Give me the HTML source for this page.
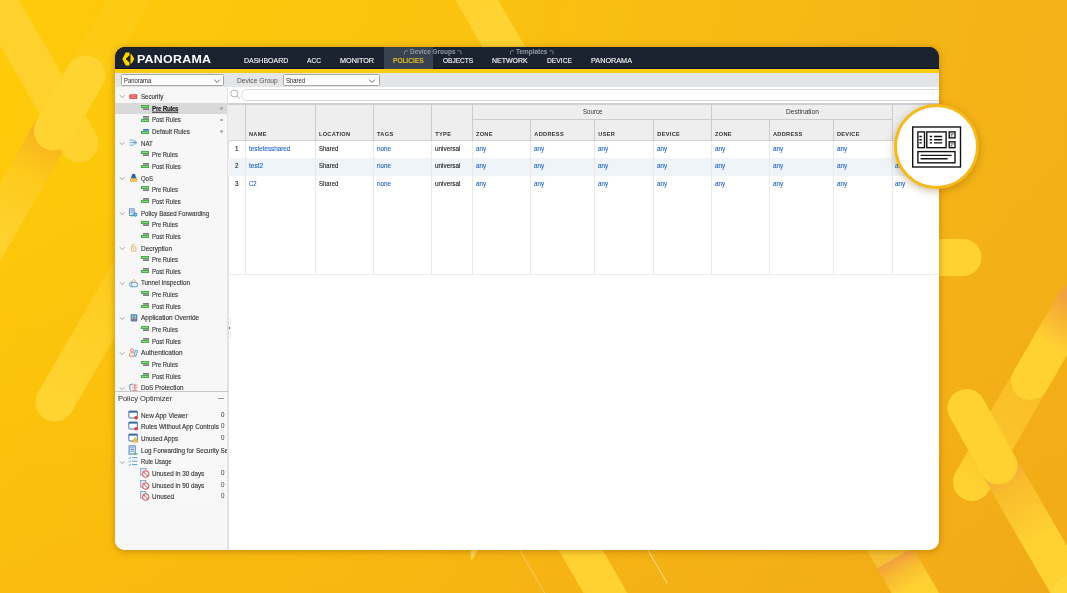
<!DOCTYPE html><html><head><meta charset="utf-8"><title>Panorama</title><style>
*{box-sizing:border-box;margin:0;padding:0}
html,body{width:1067px;height:593px;overflow:hidden;background:#F8BC14}
body{font-family:"Liberation Sans",sans-serif;position:relative}
#bg{position:absolute;left:0;top:0;width:1067px;height:593px}
#win{will-change:transform;position:absolute;left:115px;top:47px;width:824px;height:503px;border-radius:10px;background:linear-gradient(#1B2330 0,#1B2330 21px,#fff 21px,#fff 100%);overflow:hidden;box-shadow:0 1px 7px rgba(150,90,0,.55)}
.abs{position:absolute}
.t{position:absolute;white-space:nowrap;line-height:1;transform-origin:0 50%}
#hdr{position:absolute;left:0;top:0;width:824px;height:22.2px;background:#1B2330;border-bottom:1.1px solid #0C1030}
#ystripe{position:absolute;left:0;top:22.2px;width:824px;height:3.8px;background:#FACB10}
#tbar{position:absolute;left:0;top:26px;width:824px;height:14.2px;background:#E4E5E7}
#side{position:absolute;left:0;top:40.2px;width:112.6px;height:463px;background:#F7F7F7}
#sideb{position:absolute;left:112px;top:40.2px;width:1.9px;height:463px;background:#E1E3E6}
.nav{color:#F1F2F4;font-size:7.9px;-webkit-text-stroke:.15px currentColor}
.grp{color:#929AA6;font-size:6.8px;font-weight:bold}
.tr{color:#2E2E2E;font-size:6.6px;-webkit-text-stroke:.1px currentColor}
.hd{color:#333;font-size:5.65px;font-weight:bold;letter-spacing:.3px}
.cell{font-size:6.8px;color:#161616;-webkit-text-stroke:.1px currentColor}
.lnk{color:#1C63C9}
.vl{position:absolute;width:1px;background:#EAEAEA}
.vh{position:absolute;width:1px;background:#C9CCD0}
.hl{position:absolute;height:1px;background:#C9CCD0}
</style></head><body>
<svg id="bg" width="1067" height="593" viewBox="0 0 1067 593">
<defs>
<linearGradient id="g0" gradientUnits="userSpaceOnUse" x1="0" y1="150" x2="1067" y2="340"><stop offset="0" stop-color="#FECA0A"/><stop offset=".4" stop-color="#FBC20F"/><stop offset=".75" stop-color="#F5B716"/><stop offset="1" stop-color="#F3B118"/></linearGradient>
<linearGradient id="gV" x1="0" y1="0" x2="0" y2="1"><stop offset="0" stop-color="#F09A14" stop-opacity="0"/><stop offset=".25" stop-color="#F09A14" stop-opacity="0"/><stop offset="1" stop-color="#EE9816" stop-opacity=".25"/></linearGradient>
<linearGradient id="gB2" gradientUnits="userSpaceOnUse" x1="50" y1="135" x2="-20" y2="257"><stop offset="0" stop-color="#F7AE26"/><stop offset=".12" stop-color="#FABB1C"/><stop offset=".32" stop-color="#FDCA1C"/><stop offset=".7" stop-color="#FED02A"/><stop offset="1" stop-color="#FED32F"/></linearGradient>
<linearGradient id="gC" gradientUnits="userSpaceOnUse" x1="125" y1="281" x2="55" y2="402"><stop offset="0" stop-color="#FDCB1E"/><stop offset="1" stop-color="#FFD431"/></linearGradient>
<linearGradient id="gT" gradientUnits="userSpaceOnUse" x1="465" y1="-20" x2="510" y2="58"><stop offset="0" stop-color="#FECF2C"/><stop offset=".5" stop-color="#FFD331"/><stop offset="1" stop-color="#FFD431"/></linearGradient>
<linearGradient id="gR2" gradientUnits="userSpaceOnUse" x1="1000" y1="468" x2="1075" y2="598"><stop offset="0" stop-color="#F5A83C"/><stop offset=".15" stop-color="#F9BC2C"/><stop offset=".55" stop-color="#FFD232"/><stop offset="1" stop-color="#FFD232"/></linearGradient>
<linearGradient id="gR3" gradientUnits="userSpaceOnUse" x1="884" y1="539.2" x2="914" y2="591.2"><stop offset="0" stop-color="#F8C232"/><stop offset=".36" stop-color="#F7BE33"/><stop offset=".37" stop-color="#F2A23E"/><stop offset=".65" stop-color="#F9BE30"/><stop offset=".95" stop-color="#FFD232"/></linearGradient>
<linearGradient id="gR4" gradientUnits="userSpaceOnUse" x1="1040" y1="390" x2="980" y2="494"><stop offset="0" stop-color="#F9BE26"/><stop offset=".6" stop-color="#FBC52B"/><stop offset="1" stop-color="#FFD232"/></linearGradient>
<linearGradient id="gR5" gradientUnits="userSpaceOnUse" x1="1075" y1="303" x2="1050" y2="346.300"><stop offset="0" stop-color="#F3A33E"/><stop offset=".35" stop-color="#F7B334"/><stop offset="1" stop-color="#FFD232"/></linearGradient>
</defs>
<rect width="1067" height="593" fill="url(#g0)"/>
<rect width="1067" height="593" fill="url(#gV)"/>
<g fill="none" stroke-linecap="round">
<!-- left X -->
<line x1="-20" y1="257" x2="54" y2="128" stroke="url(#gB2)" stroke-width="39" stroke-linecap="butt"/>
<line x1="-22" y1="-32" x2="79" y2="143" stroke="#FED12D" stroke-width="39"/>
<line x1="140" y1="-20" x2="85" y2="75.300" stroke="#FFE46A" stroke-opacity=".09" stroke-width="38" stroke-linecap="butt"/>
<line x1="85.5" y1="75.300" x2="53.500" y2="130.700" stroke="#FFD330" stroke-width="39.500"/>
<!-- left lower pill -->
<line x1="135" y1="263.5" x2="55" y2="402" stroke="url(#gC)" stroke-width="39"/>
<!-- top band -->
<line x1="465" y1="-20" x2="515" y2="66" stroke="url(#gT)" stroke-width="37" stroke-linecap="butt"/>
<!-- bottom middle band and lines -->
<line x1="569" y1="530" x2="620" y2="618" stroke="#FFD232" stroke-width="38" stroke-linecap="butt"/>
<line x1="514" y1="540" x2="550" y2="602" stroke="#FAD57A" stroke-opacity=".8" stroke-width="1"/>
<line x1="642" y1="540" x2="667" y2="583" stroke="#FBDFA0" stroke-opacity=".8" stroke-width="1.1"/>
<path d="M470 548 L479 548 L471.5 561 Z" fill="#FDD65A" stroke="none"/>
<!-- right: horizontal pill -->
<line x1="900" y1="257.4" x2="963" y2="257.4" stroke="#FFD232" stroke-width="37"/>
<!-- right X -->
<line x1="1040" y1="364" x2="972" y2="482" stroke="url(#gR4)" stroke-width="38"/>
<line x1="998.5" y1="465.5" x2="1085" y2="615" stroke="url(#gR2)" stroke-width="38" stroke-linecap="butt"/>
<line x1="966.5" y1="408" x2="998.5" y2="465.5" stroke="#FFD232" stroke-width="38"/>
<line x1="1075" y1="303" x2="1030" y2="381" stroke="url(#gR5)" stroke-width="38"/>
<circle cx="1071" cy="596" r="20" fill="#FFD739" stroke="none"/>
<!-- band under window right -->
<line x1="879" y1="530" x2="931" y2="620" stroke="url(#gR3)" stroke-width="41" stroke-linecap="butt"/>
</g>
</svg>

<div id="win">
<div id="hdr"></div><div id="ystripe"></div><div id="tbar"></div><div id="side"></div><div id="sideb"></div>
<div class="abs" style="left:268.8px;top:0;width:48.8px;height:22px;background:#39424F"></div>
<svg class="abs" style="left:6px;top:4px" width="15" height="16" viewBox="121 51 15 16"><path d="M129.5 52.5H125.7L122.3 58.9L125.7 65.4H129.5V62.6L125.6 58.9L129.5 55.2Z" fill="#FFD500"/><path d="M130.5 54.3H131.6L134.3 58.9L131.6 63.5H130.5Z" fill="#FFD500"/></svg>
<div class="t " style="left:22.2px;top:12.8px;transform:translateY(-50%) scaleX(1.220);color:#fff;font-weight:bold;font-size:10.2px;letter-spacing:.2px">PANORAMA</div>
<div class="t nav" style="left:128.6px;top:13.6px;transform:translateY(-50%) scaleX(0.886);">DASHBOARD</div>
<div class="t nav" style="left:191.9px;top:13.6px;transform:translateY(-50%) scaleX(0.834);">ACC</div>
<div class="t nav" style="left:224.8px;top:13.6px;transform:translateY(-50%) scaleX(0.918);">MONITOR</div>
<div class="t nav" style="left:277.7px;top:13.6px;transform:translateY(-50%) scaleX(0.846);color:#FFD01C;">POLICIES</div>
<div class="t nav" style="left:327.8px;top:13.6px;transform:translateY(-50%) scaleX(0.827);">OBJECTS</div>
<div class="t nav" style="left:376.8px;top:13.6px;transform:translateY(-50%) scaleX(0.885);">NETWORK</div>
<div class="t nav" style="left:431.5px;top:13.6px;transform:translateY(-50%) scaleX(0.854);">DEVICE</div>
<div class="t nav" style="left:475.8px;top:13.6px;transform:translateY(-50%) scaleX(0.920);">PANORAMA</div>
<div class="t grp" style="left:295.2px;top:5.3px;transform:translateY(-50%) scaleX(0.948);">Device Groups</div>
<div class="t grp" style="left:401.2px;top:5.3px;transform:translateY(-50%) scaleX(0.945);">Templates</div>
<svg class="abs" style="left:288.6px;top:3.4px" width="4.6" height="4.6" viewBox="0 0 4.6 4.6"><path d="M.5 4.4V2.2Q.5 .8 2 .8H4.2" fill="none" stroke="#8B94A1" stroke-width=".8"/></svg>
<svg class="abs" style="left:342.0px;top:3.4px" width="4.6" height="4.6" viewBox="0 0 4.6 4.6"><path d="M.4 .8H2.6Q4.1 .8 4.1 2.2V4.4" fill="none" stroke="#8B94A1" stroke-width=".8"/></svg>
<svg class="abs" style="left:394.8px;top:3.4px" width="4.6" height="4.6" viewBox="0 0 4.6 4.6"><path d="M.5 4.4V2.2Q.5 .8 2 .8H4.2" fill="none" stroke="#8B94A1" stroke-width=".8"/></svg>
<svg class="abs" style="left:434.2px;top:3.4px" width="4.6" height="4.6" viewBox="0 0 4.6 4.6"><path d="M.4 .8H2.6Q4.1 .8 4.1 2.2V4.4" fill="none" stroke="#8B94A1" stroke-width=".8"/></svg>
<div class="abs" style="left:5.6px;top:27.2px;width:103.9px;height:11.9px;background:#fff;border:.8px solid #A6A6A6;border-radius:1.5px"></div>
<div class="t " style="left:8.6px;top:33.9px;transform:translateY(-50%) scaleX(0.867);font-size:6.8px;color:#222">Panorama</div>
<svg class="abs" style="left:98.3px;top:30.5px" width="8" height="6" viewBox="0 0 8 6"><path d="M1.2 1.6 L4 4.4 L6.8 1.6" fill="none" stroke="#555" stroke-width=".9"/></svg>
<div class="t " style="left:122.0px;top:34.0px;transform:translateY(-50%) scaleX(0.914);font-size:7.3px;color:#555">Device Group</div>
<div class="abs" style="left:168.3px;top:27.2px;width:96.3px;height:11.9px;background:#fff;border:.8px solid #A6A6A6;border-radius:1.5px"></div>
<div class="t " style="left:171.3px;top:33.9px;transform:translateY(-50%) scaleX(0.871);font-size:6.8px;color:#222">Shared</div>
<svg class="abs" style="left:253.4px;top:30.5px" width="8" height="6" viewBox="0 0 8 6"><path d="M1.2 1.6 L4 4.4 L6.8 1.6" fill="none" stroke="#555" stroke-width=".9"/></svg>
<div class="abs" style="left:113.2px;top:40.2px;width:720px;height:16.6px;background:#fff"></div>
<div class="abs" style="left:126.0px;top:42.2px;width:720px;height:11.6px;border:.9px solid #D9D9D9;border-radius:5.8px;background:#fff"></div>
<svg class="abs" style="left:114.6px;top:42.400000000000006px" width="11" height="11" viewBox="0 0 11 11"><circle cx="4.3" cy="4.5" r="3.5" fill="none" stroke="#9A9A9A" stroke-width=".75"/><path d="M6.9 7.1 L9.7 10" stroke="#9A9A9A" stroke-width=".85"/></svg>
<div class="abs" style="left:113.4px;top:57.3px;width:720px;height:36.3px;background:#EEEEEE"></div>
<div class="abs" style="left:113.4px;top:56.3px;width:720px;height:1.4px;background:#CDCFD2"></div>
<div class="abs" style="left:113.4px;top:111.3px;width:720px;height:17.5px;background:#EEF4F8"></div>
<div class="vh" style="left:129.9px;top:57.3px;height:36.3px"></div>
<div class="vl" style="left:129.9px;top:94.0px;height:133.3px"></div>
<div class="vh" style="left:199.8px;top:57.3px;height:36.3px"></div>
<div class="vl" style="left:199.8px;top:94.0px;height:133.3px"></div>
<div class="vh" style="left:257.9px;top:57.3px;height:36.3px"></div>
<div class="vl" style="left:257.9px;top:94.0px;height:133.3px"></div>
<div class="vh" style="left:316.3px;top:57.3px;height:36.3px"></div>
<div class="vl" style="left:316.3px;top:94.0px;height:133.3px"></div>
<div class="vh" style="left:356.8px;top:57.3px;height:36.3px"></div>
<div class="vl" style="left:356.8px;top:94.0px;height:133.3px"></div>
<div class="vh" style="left:415.2px;top:71.9px;height:21.7px"></div>
<div class="vl" style="left:415.2px;top:94.0px;height:133.3px"></div>
<div class="vh" style="left:479.2px;top:71.9px;height:21.7px"></div>
<div class="vl" style="left:479.2px;top:94.0px;height:133.3px"></div>
<div class="vh" style="left:538.2px;top:71.9px;height:21.7px"></div>
<div class="vl" style="left:538.2px;top:94.0px;height:133.3px"></div>
<div class="vh" style="left:595.9px;top:57.3px;height:36.3px"></div>
<div class="vl" style="left:595.9px;top:94.0px;height:133.3px"></div>
<div class="vh" style="left:653.9px;top:71.9px;height:21.7px"></div>
<div class="vl" style="left:653.9px;top:94.0px;height:133.3px"></div>
<div class="vh" style="left:717.8px;top:71.9px;height:21.7px"></div>
<div class="vl" style="left:717.8px;top:94.0px;height:133.3px"></div>
<div class="vh" style="left:776.7px;top:57.3px;height:36.3px"></div>
<div class="vl" style="left:776.7px;top:94.0px;height:133.3px"></div>
<div class="hl" style="left:357.3px;top:71.8px;width:419.9px"></div>
<div class="abs" style="left:113.4px;top:93.1px;width:720px;height:1px;background:#D2D2D2"></div>
<div class="hl" style="left:113.4px;top:226.8px;width:720px;background:#ECECEC"></div>
<div class="t " style="left:467.6px;top:64.9px;transform:translateY(-50%) scaleX(0.915);font-size:6.7px;color:#333">Source</div>
<div class="t " style="left:670.5px;top:64.9px;transform:translateY(-50%) scaleX(0.983);font-size:6.7px;color:#333">Destination</div>
<div class="t hd" style="left:133.9px;top:88.0px;transform:translateY(-50%) scaleX(1.0);">NAME</div>
<div class="t hd" style="left:203.9px;top:88.0px;transform:translateY(-50%) scaleX(1.0);">LOCATION</div>
<div class="t hd" style="left:262.0px;top:88.0px;transform:translateY(-50%) scaleX(1.0);">TAGS</div>
<div class="t hd" style="left:320.3px;top:88.0px;transform:translateY(-50%) scaleX(1.0);">TYPE</div>
<div class="t hd" style="left:360.9px;top:88.0px;transform:translateY(-50%) scaleX(1.0);">ZONE</div>
<div class="t hd" style="left:419.3px;top:88.0px;transform:translateY(-50%) scaleX(1.0);">ADDRESS</div>
<div class="t hd" style="left:483.3px;top:88.0px;transform:translateY(-50%) scaleX(1.0);">USER</div>
<div class="t hd" style="left:542.3px;top:88.0px;transform:translateY(-50%) scaleX(1.0);">DEVICE</div>
<div class="t hd" style="left:600.0px;top:88.0px;transform:translateY(-50%) scaleX(1.0);">ZONE</div>
<div class="t hd" style="left:658.0px;top:88.0px;transform:translateY(-50%) scaleX(1.0);">ADDRESS</div>
<div class="t hd" style="left:721.9px;top:88.0px;transform:translateY(-50%) scaleX(1.0);">DEVICE</div>
<div class="t cell" style="left:120.2px;top:101.8px;transform:translateY(-50%) scaleX(0.925);">1</div>
<div class="t cell lnk" style="left:133.9px;top:101.8px;transform:translateY(-50%) scaleX(0.926);">testetesshared</div>
<div class="t cell" style="left:203.6px;top:101.8px;transform:translateY(-50%) scaleX(0.880);">Shared</div>
<div class="t cell lnk" style="left:261.9px;top:101.8px;transform:translateY(-50%) scaleX(0.926);">none</div>
<div class="t cell" style="left:319.8px;top:101.8px;transform:translateY(-50%) scaleX(0.934);">universal</div>
<div class="t cell lnk" style="left:360.9px;top:101.8px;transform:translateY(-50%) scaleX(0.930);">any</div>
<div class="t cell lnk" style="left:419.3px;top:101.8px;transform:translateY(-50%) scaleX(0.930);">any</div>
<div class="t cell lnk" style="left:483.3px;top:101.8px;transform:translateY(-50%) scaleX(0.930);">any</div>
<div class="t cell lnk" style="left:542.3px;top:101.8px;transform:translateY(-50%) scaleX(0.930);">any</div>
<div class="t cell lnk" style="left:600.0px;top:101.8px;transform:translateY(-50%) scaleX(0.930);">any</div>
<div class="t cell lnk" style="left:658.0px;top:101.8px;transform:translateY(-50%) scaleX(0.930);">any</div>
<div class="t cell lnk" style="left:721.9px;top:101.8px;transform:translateY(-50%) scaleX(0.930);">any</div>
<div class="t cell lnk" style="left:780.3px;top:101.8px;transform:translateY(-50%) scaleX(0.930);">any</div>
<div class="t cell" style="left:120.2px;top:119.2px;transform:translateY(-50%) scaleX(0.925);">2</div>
<div class="t cell lnk" style="left:133.9px;top:119.2px;transform:translateY(-50%) scaleX(0.963);">test2</div>
<div class="t cell" style="left:203.6px;top:119.2px;transform:translateY(-50%) scaleX(0.880);">Shared</div>
<div class="t cell lnk" style="left:261.9px;top:119.2px;transform:translateY(-50%) scaleX(0.926);">none</div>
<div class="t cell" style="left:319.8px;top:119.2px;transform:translateY(-50%) scaleX(0.934);">universal</div>
<div class="t cell lnk" style="left:360.9px;top:119.2px;transform:translateY(-50%) scaleX(0.930);">any</div>
<div class="t cell lnk" style="left:419.3px;top:119.2px;transform:translateY(-50%) scaleX(0.930);">any</div>
<div class="t cell lnk" style="left:483.3px;top:119.2px;transform:translateY(-50%) scaleX(0.930);">any</div>
<div class="t cell lnk" style="left:542.3px;top:119.2px;transform:translateY(-50%) scaleX(0.930);">any</div>
<div class="t cell lnk" style="left:600.0px;top:119.2px;transform:translateY(-50%) scaleX(0.930);">any</div>
<div class="t cell lnk" style="left:658.0px;top:119.2px;transform:translateY(-50%) scaleX(0.930);">any</div>
<div class="t cell lnk" style="left:721.9px;top:119.2px;transform:translateY(-50%) scaleX(0.930);">any</div>
<div class="t cell lnk" style="left:780.3px;top:119.2px;transform:translateY(-50%) scaleX(0.930);">any</div>
<div class="t cell" style="left:120.2px;top:136.6px;transform:translateY(-50%) scaleX(0.925);">3</div>
<div class="t cell lnk" style="left:133.9px;top:136.6px;transform:translateY(-50%) scaleX(0.873);">C2</div>
<div class="t cell" style="left:203.6px;top:136.6px;transform:translateY(-50%) scaleX(0.880);">Shared</div>
<div class="t cell lnk" style="left:261.9px;top:136.6px;transform:translateY(-50%) scaleX(0.926);">none</div>
<div class="t cell" style="left:319.8px;top:136.6px;transform:translateY(-50%) scaleX(0.934);">universal</div>
<div class="t cell lnk" style="left:360.9px;top:136.6px;transform:translateY(-50%) scaleX(0.930);">any</div>
<div class="t cell lnk" style="left:419.3px;top:136.6px;transform:translateY(-50%) scaleX(0.930);">any</div>
<div class="t cell lnk" style="left:483.3px;top:136.6px;transform:translateY(-50%) scaleX(0.930);">any</div>
<div class="t cell lnk" style="left:542.3px;top:136.6px;transform:translateY(-50%) scaleX(0.930);">any</div>
<div class="t cell lnk" style="left:600.0px;top:136.6px;transform:translateY(-50%) scaleX(0.930);">any</div>
<div class="t cell lnk" style="left:658.0px;top:136.6px;transform:translateY(-50%) scaleX(0.930);">any</div>
<div class="t cell lnk" style="left:721.9px;top:136.6px;transform:translateY(-50%) scaleX(0.930);">any</div>
<div class="t cell lnk" style="left:780.3px;top:136.6px;transform:translateY(-50%) scaleX(0.930);">any</div>
<div class="abs" style="left:0;top:55.6px;width:112.3px;height:11.1px;background:#D9D9D9"></div>
<svg class="abs" style="left:3.9px;top:47.3px" width="6.4" height="4.8" viewBox="0 0 6.4 4.8"><path d="M.8 1.2 L3.2 3.7 L5.6 1.2" fill="none" stroke="#8C8C8C" stroke-width=".75"/></svg>
<svg class="abs" style="left:13.6px;top:44.7px" width="9.2" height="9.6" viewBox="0 0 9.2 9.6"><rect x="0.3" y="2.2" width="8" height="4.8" rx="1" fill="#DC4B4B"/><path d="M1.3 3.8h6M1.3 5.4h6M3 2.6v1.2M5.6 2.6v1.2M4.3 3.8v1.6M2.2 5.4v1.2M6.2 5.4v1.2" stroke="#F6B9B9" stroke-width=".5"/></svg>
<div class="t tr" style="left:25.7px;top:50.0px;transform:translateY(-50%) scaleX(0.932);">Security</div>
<div class="abs" style="left:27.7px;top:60.2px;width:6.5px;height:2.7px;background:#9C9C9C;border-bottom:.7px solid #7E7E7E"></div>
<div class="abs" style="left:25.7px;top:57.5px;width:8.5px;height:3.2px;background:#8FD38B;border:.75px solid #43B049"></div>
<div class="t tr" style="left:37.2px;top:61.6px;transform:translateY(-50%) scaleX(0.948);font-weight:bold;text-decoration:underline;color:#222;letter-spacing:-.3px;text-decoration-thickness:.6px;text-underline-offset:.6px">Pre Rules</div>
<div class="abs" style="left:105.4px;top:59.9px;width:2.8px;height:2.8px;border-radius:50%;background:#ABABAB"></div>
<div class="abs" style="left:27.7px;top:69.2px;width:6.5px;height:3px;background:#9C9C9C;border-top:.7px solid #7E7E7E"></div>
<div class="abs" style="left:25.7px;top:71.6px;width:8.5px;height:3.2px;background:#8FD38B;border:.75px solid #43B049"></div>
<div class="t tr" style="left:37.2px;top:73.2px;transform:translateY(-50%) scaleX(0.903);">Post Rules</div>
<div class="abs" style="left:105.4px;top:71.5px;width:2.8px;height:2.8px;border-radius:50%;background:#ABABAB"></div>
<div class="abs" style="left:27.7px;top:81.5px;width:6.5px;height:3px;background:#6FA3DA;border-top:.8px solid #2F6FBA;border-radius:1px 1px 0 0"></div>
<div class="abs" style="left:25.7px;top:83.7px;width:8.5px;height:3.2px;background:#8FD38B;border:.75px solid #43B049"></div>
<div class="t tr" style="left:37.2px;top:84.8px;transform:translateY(-50%) scaleX(0.955);">Default Rules</div>
<div class="abs" style="left:105.4px;top:83.1px;width:2.8px;height:2.8px;border-radius:50%;background:#ABABAB"></div>
<svg class="abs" style="left:3.9px;top:93.9px" width="6.4" height="4.8" viewBox="0 0 6.4 4.8"><path d="M.8 1.2 L3.2 3.7 L5.6 1.2" fill="none" stroke="#8C8C8C" stroke-width=".75"/></svg>
<svg class="abs" style="left:13.6px;top:91.3px" width="9.2" height="9.6" viewBox="0 0 9.2 9.6"><path d="M.6 2h3.2M.6 4.6h7M.6 7.2h3.2M3.8 2c1 0 1.6 1.1 1.6 2.6S4.8 7.2 3.8 7.2M6 2.9l1.8 1.7L6 6.3" fill="none" stroke="#3A8FD0" stroke-width=".75"/></svg>
<div class="t tr" style="left:25.7px;top:96.6px;transform:translateY(-50%) scaleX(0.937);">NAT</div>
<div class="abs" style="left:27.7px;top:106.8px;width:6.5px;height:2.7px;background:#9C9C9C;border-bottom:.7px solid #7E7E7E"></div>
<div class="abs" style="left:25.7px;top:104.0px;width:8.5px;height:3.2px;background:#8FD38B;border:.75px solid #43B049"></div>
<div class="t tr" style="left:37.2px;top:108.2px;transform:translateY(-50%) scaleX(0.894);">Pre Rules</div>
<div class="abs" style="left:27.7px;top:115.8px;width:6.5px;height:3px;background:#9C9C9C;border-top:.7px solid #7E7E7E"></div>
<div class="abs" style="left:25.7px;top:118.2px;width:8.5px;height:3.2px;background:#8FD38B;border:.75px solid #43B049"></div>
<div class="t tr" style="left:37.2px;top:119.8px;transform:translateY(-50%) scaleX(0.903);">Post Rules</div>
<svg class="abs" style="left:3.9px;top:128.8px" width="6.4" height="4.8" viewBox="0 0 6.4 4.8"><path d="M.8 1.2 L3.2 3.7 L5.6 1.2" fill="none" stroke="#8C8C8C" stroke-width=".75"/></svg>
<svg class="abs" style="left:13.6px;top:126.2px" width="9.2" height="9.6" viewBox="0 0 9.2 9.6"><path d="M4.6 .8c1.2 0 1.9.9 1.9 2.1 0 .7.5 1.1.9 1.6v.9H1.8v-.9c.4-.5.9-.9.9-1.6C2.700 1.700 3.400.800 4.600.800z" fill="#2E5FA4"/><rect x="1" y="5.600" width="7.300" height="3.200" rx=".7" fill="#E9B233"/><path d="M2 7.200h5.300" stroke="#FBE7B5" stroke-width=".9" stroke-dasharray="1.4 .5"/></svg>
<div class="t tr" style="left:25.7px;top:131.6px;transform:translateY(-50%) scaleX(0.901);">QoS</div>
<div class="abs" style="left:27.7px;top:141.7px;width:6.5px;height:2.7px;background:#9C9C9C;border-bottom:.7px solid #7E7E7E"></div>
<div class="abs" style="left:25.7px;top:139.0px;width:8.5px;height:3.2px;background:#8FD38B;border:.75px solid #43B049"></div>
<div class="t tr" style="left:37.2px;top:143.1px;transform:translateY(-50%) scaleX(0.894);">Pre Rules</div>
<div class="abs" style="left:27.7px;top:150.8px;width:6.5px;height:3px;background:#9C9C9C;border-top:.7px solid #7E7E7E"></div>
<div class="abs" style="left:25.7px;top:153.2px;width:8.5px;height:3.2px;background:#8FD38B;border:.75px solid #43B049"></div>
<div class="t tr" style="left:37.2px;top:154.8px;transform:translateY(-50%) scaleX(0.903);">Post Rules</div>
<svg class="abs" style="left:3.9px;top:163.8px" width="6.4" height="4.8" viewBox="0 0 6.4 4.8"><path d="M.8 1.2 L3.2 3.7 L5.6 1.2" fill="none" stroke="#8C8C8C" stroke-width=".75"/></svg>
<svg class="abs" style="left:13.6px;top:161.2px" width="9.2" height="9.6" viewBox="0 0 9.2 9.6"><rect x=".6" y=".8" width="4.6" height="6.6" fill="#DCE9F6" stroke="#3A73B5" stroke-width=".7"/><path d="M1.6 2.6h2.6M1.6 4.2h2.6" stroke="#3A73B5" stroke-width=".6"/><circle cx="6.3" cy="6.6" r="2.1" fill="#3A8FD0"/><path d="M5.3 6.6h2M6.5 5.7l.9.9-.9.9" stroke="#fff" stroke-width=".5" fill="none"/><circle cx="3" cy="7.6" r="1.1" fill="#4DB748"/></svg>
<div class="t tr" style="left:25.7px;top:166.5px;transform:translateY(-50%) scaleX(0.934);">Policy Based Forwarding</div>
<div class="abs" style="left:27.7px;top:176.7px;width:6.5px;height:2.7px;background:#9C9C9C;border-bottom:.7px solid #7E7E7E"></div>
<div class="abs" style="left:25.7px;top:174.0px;width:8.5px;height:3.2px;background:#8FD38B;border:.75px solid #43B049"></div>
<div class="t tr" style="left:37.2px;top:178.1px;transform:translateY(-50%) scaleX(0.894);">Pre Rules</div>
<div class="abs" style="left:27.7px;top:185.7px;width:6.5px;height:3px;background:#9C9C9C;border-top:.7px solid #7E7E7E"></div>
<div class="abs" style="left:25.7px;top:188.1px;width:8.5px;height:3.2px;background:#8FD38B;border:.75px solid #43B049"></div>
<div class="t tr" style="left:37.2px;top:189.7px;transform:translateY(-50%) scaleX(0.903);">Post Rules</div>
<svg class="abs" style="left:3.9px;top:198.8px" width="6.4" height="4.8" viewBox="0 0 6.4 4.8"><path d="M.8 1.2 L3.2 3.7 L5.6 1.2" fill="none" stroke="#8C8C8C" stroke-width=".75"/></svg>
<svg class="abs" style="left:13.6px;top:196.2px" width="9.2" height="9.6" viewBox="0 0 9.2 9.6"><rect x="2.3" y="3.8" width="4.6" height="4.2" rx=".6" fill="none" stroke="#E2A43A" stroke-width=".75"/><path d="M3.2 3.8V2.6a1.4 1.4 0 0 1 2.6-.6" fill="none" stroke="#E2A43A" stroke-width=".75"/><circle cx="4.6" cy="5.8" r=".6" fill="#E2A43A"/></svg>
<div class="t tr" style="left:25.7px;top:201.5px;transform:translateY(-50%) scaleX(0.983);">Decryption</div>
<div class="abs" style="left:27.7px;top:211.6px;width:6.5px;height:2.7px;background:#9C9C9C;border-bottom:.7px solid #7E7E7E"></div>
<div class="abs" style="left:25.7px;top:208.9px;width:8.5px;height:3.2px;background:#8FD38B;border:.75px solid #43B049"></div>
<div class="t tr" style="left:37.2px;top:213.0px;transform:translateY(-50%) scaleX(0.894);">Pre Rules</div>
<div class="abs" style="left:27.7px;top:220.7px;width:6.5px;height:3px;background:#9C9C9C;border-top:.7px solid #7E7E7E"></div>
<div class="abs" style="left:25.7px;top:223.1px;width:8.5px;height:3.2px;background:#8FD38B;border:.75px solid #43B049"></div>
<div class="t tr" style="left:37.2px;top:224.6px;transform:translateY(-50%) scaleX(0.903);">Post Rules</div>
<svg class="abs" style="left:3.9px;top:233.7px" width="6.4" height="4.8" viewBox="0 0 6.4 4.8"><path d="M.8 1.2 L3.2 3.7 L5.6 1.2" fill="none" stroke="#8C8C8C" stroke-width=".75"/></svg>
<svg class="abs" style="left:13.6px;top:231.1px" width="9.2" height="9.6" viewBox="0 0 9.2 9.6"><path d="M2.7 4.6C2.7 .9 6.9 .9 6.9 4.6" fill="none" stroke="#E6A63A" stroke-width=".85"/><rect x=".6" y="4.4" width="8.2" height="4.4" rx="2.1" fill="#EEF4FB" stroke="#3A80C8" stroke-width=".8"/><path d="M2.8 4.6v4" stroke="#3A80C8" stroke-width=".6"/></svg>
<div class="t tr" style="left:25.7px;top:236.4px;transform:translateY(-50%) scaleX(0.944);">Tunnel Inspection</div>
<div class="abs" style="left:27.7px;top:246.6px;width:6.5px;height:2.7px;background:#9C9C9C;border-bottom:.7px solid #7E7E7E"></div>
<div class="abs" style="left:25.7px;top:243.9px;width:8.5px;height:3.2px;background:#8FD38B;border:.75px solid #43B049"></div>
<div class="t tr" style="left:37.2px;top:247.9px;transform:translateY(-50%) scaleX(0.894);">Pre Rules</div>
<div class="abs" style="left:27.7px;top:255.6px;width:6.5px;height:3px;background:#9C9C9C;border-top:.7px solid #7E7E7E"></div>
<div class="abs" style="left:25.7px;top:258.0px;width:8.5px;height:3.2px;background:#8FD38B;border:.75px solid #43B049"></div>
<div class="t tr" style="left:37.2px;top:259.6px;transform:translateY(-50%) scaleX(0.903);">Post Rules</div>
<svg class="abs" style="left:3.9px;top:268.7px" width="6.4" height="4.8" viewBox="0 0 6.4 4.8"><path d="M.8 1.2 L3.2 3.7 L5.6 1.2" fill="none" stroke="#8C8C8C" stroke-width=".75"/></svg>
<svg class="abs" style="left:13.6px;top:266.1px" width="9.2" height="9.6" viewBox="0 0 9.2 9.6"><rect x="1.7" y="1.2" width="6.6" height="7.4" rx="1" fill="#3F7EC6"/><path d="M2.8 2.4h1.7v1.5H2.8zM5.5 2.4h1.7v1.5H5.5z" fill="#BFE0C0"/><path d="M2.8 4.4h1.7v1.4H2.8zM5.5 4.4h1.7v1.4H5.5z" fill="#E9D27A"/><path d="M2.8 6.3h1.7v1.4H2.8zM5.5 6.3h1.7v1.4H5.5z" fill="#E56A5A"/></svg>
<div class="t tr" style="left:25.7px;top:271.4px;transform:translateY(-50%) scaleX(0.980);">Application Override</div>
<div class="abs" style="left:27.7px;top:281.5px;width:6.5px;height:2.7px;background:#9C9C9C;border-bottom:.7px solid #7E7E7E"></div>
<div class="abs" style="left:25.7px;top:278.8px;width:8.5px;height:3.2px;background:#8FD38B;border:.75px solid #43B049"></div>
<div class="t tr" style="left:37.2px;top:282.9px;transform:translateY(-50%) scaleX(0.894);">Pre Rules</div>
<div class="abs" style="left:27.7px;top:290.5px;width:6.5px;height:3px;background:#9C9C9C;border-top:.7px solid #7E7E7E"></div>
<div class="abs" style="left:25.7px;top:292.9px;width:8.5px;height:3.2px;background:#8FD38B;border:.75px solid #43B049"></div>
<div class="t tr" style="left:37.2px;top:294.5px;transform:translateY(-50%) scaleX(0.903);">Post Rules</div>
<svg class="abs" style="left:3.9px;top:303.6px" width="6.4" height="4.8" viewBox="0 0 6.4 4.8"><path d="M.8 1.2 L3.2 3.7 L5.6 1.2" fill="none" stroke="#8C8C8C" stroke-width=".75"/></svg>
<svg class="abs" style="left:13.6px;top:301.0px" width="9.2" height="9.6" viewBox="0 0 9.2 9.6"><circle cx="3.1" cy="2.4" r="1.6" fill="#fff" stroke="#E8643C" stroke-width=".8"/><path d="M.6 8.2V6.6c0-1.2 1-1.9 2.5-1.9s2.5.7 2.5 1.9v1.6z" fill="#fff" stroke="#E8643C" stroke-width=".8"/><path d="M6.6 2.2l2 .6-1.7 5.6-2-.6z" fill="#DDEBF8" stroke="#3A8FD0" stroke-width=".75"/></svg>
<div class="t tr" style="left:25.7px;top:306.3px;transform:translateY(-50%) scaleX(0.995);">Authentication</div>
<div class="abs" style="left:27.7px;top:316.4px;width:6.5px;height:2.7px;background:#9C9C9C;border-bottom:.7px solid #7E7E7E"></div>
<div class="abs" style="left:25.7px;top:313.8px;width:8.5px;height:3.2px;background:#8FD38B;border:.75px solid #43B049"></div>
<div class="t tr" style="left:37.2px;top:317.8px;transform:translateY(-50%) scaleX(0.894);">Pre Rules</div>
<div class="abs" style="left:27.7px;top:325.5px;width:6.5px;height:3px;background:#9C9C9C;border-top:.7px solid #7E7E7E"></div>
<div class="abs" style="left:25.7px;top:327.9px;width:8.5px;height:3.2px;background:#8FD38B;border:.75px solid #43B049"></div>
<div class="t tr" style="left:37.2px;top:329.5px;transform:translateY(-50%) scaleX(0.903);">Post Rules</div>
<svg class="abs" style="left:3.9px;top:338.6px" width="6.4" height="4.8" viewBox="0 0 6.4 4.8"><path d="M.8 1.2 L3.2 3.7 L5.6 1.2" fill="none" stroke="#8C8C8C" stroke-width=".75"/></svg>
<svg class="abs" style="left:13.6px;top:335.9px" width="9.2" height="9.6" viewBox="0 0 9.2 9.6"><path d="M4 .7C2.8 1.5 1.8 1.8.8 1.8v3.4c0 1.8 1.2 3 3.2 3.9" fill="none" stroke="#3A73B5" stroke-width=".8"/><path d="M3.4 2.2h5M3.4 4.8h5M3.4 7.4h5M5.9 .8v8" stroke="#DC4B4B" stroke-width=".8" stroke-dasharray="1.4 .5"/></svg>
<div class="t tr" style="left:25.7px;top:341.2px;transform:translateY(-50%) scaleX(0.956);">DoS Protection</div>
<div class="abs" style="left:0;top:343.6px;width:112.3px;height:112.5px;background:#F8F8F8"></div>
<div class="abs" style="left:0;top:343.7px;width:113px;height:1.7px;background:#C9C9C9"></div>
<div class="t " style="left:2.9px;top:352.1px;transform:translateY(-50%);font-size:7.5px;color:#2A2A2A">Policy Optimizer</div>
<div class="abs" style="left:102.7px;top:351.2px;width:6px;height:.7px;background:#999"></div>
<svg class="abs" style="left:13.4px;top:362.8px" width="10.2" height="10.800" viewBox="0 0 9.6 10" preserveAspectRatio="none"><rect x=".8" y="1" width="8" height="6.4" rx=".6" fill="#fff" stroke="#2E5F9C" stroke-width=".8"/><rect x=".8" y="1" width="8" height="1.4" fill="#2E5F9C"/><circle cx="7.6" cy="7.2" r="1.7" fill="#DC3B3B"/></svg>
<div class="t tr" style="left:25.7px;top:368.6px;transform:translateY(-50%) scaleX(0.970);">New App Viewer</div>
<div class="t tr" style="left:105.6px;top:367.8px;transform:translateY(-50%) scaleX(0.94);color:#555">0</div>
<svg class="abs" style="left:13.4px;top:374.4px" width="10.2" height="10.800" viewBox="0 0 9.6 10" preserveAspectRatio="none"><rect x=".8" y="1" width="8" height="6.4" rx=".6" fill="#fff" stroke="#2E5F9C" stroke-width=".8"/><rect x=".8" y="1" width="8" height="1.4" fill="#2E5F9C"/><circle cx="7.6" cy="7.2" r="1.7" fill="#DC3B3B"/></svg>
<div class="t tr" style="left:25.7px;top:380.2px;transform:translateY(-50%) scaleX(0.966);">Rules Without App Controls</div>
<div class="t tr" style="left:105.6px;top:379.4px;transform:translateY(-50%) scaleX(0.94);color:#555">0</div>
<svg class="abs" style="left:13.4px;top:386.1px" width="10.2" height="10.800" viewBox="0 0 9.6 10" preserveAspectRatio="none"><rect x=".8" y="1" width="8" height="6.4" rx=".6" fill="#fff" stroke="#2E5F9C" stroke-width=".8"/><rect x=".8" y="1" width="8" height="1.4" fill="#2E5F9C"/><path d="M6.6 3.6L9.2 8.6H4z" fill="#F3C24A" stroke="#D79A1E" stroke-width=".4"/></svg>
<div class="t tr" style="left:25.7px;top:391.9px;transform:translateY(-50%) scaleX(0.943);">Unused Apps</div>
<div class="t tr" style="left:105.6px;top:391.1px;transform:translateY(-50%) scaleX(0.94);color:#555">0</div>
<svg class="abs" style="left:13.4px;top:397.7px" width="10.2" height="10.800" viewBox="0 0 9.6 10" preserveAspectRatio="none"><rect x="1" y=".8" width="5.8" height="7.6" fill="#E3ECF6" stroke="#3A6FAE" stroke-width=".8"/><path d="M2.2 2.6h3.4M2.2 4.2h3.4M2.2 5.8h3.4" stroke="#3A6FAE" stroke-width=".6"/><path d="M5.6 8.2h3.4" stroke="#4DB748" stroke-width="1.2"/></svg>
<div class="t tr" style="left:25.7px;top:403.5px;transform:translateY(-50%) scaleX(0.961);">Log Forwarding for Security Ser</div>
<svg class="abs" style="left:3.9px;top:412.8px" width="6.4" height="4.8" viewBox="0 0 6.4 4.8"><path d="M.8 1.2 L3.2 3.7 L5.6 1.2" fill="none" stroke="#8C8C8C" stroke-width=".75"/></svg>
<svg class="abs" style="left:13.4px;top:409.4px" width="10.2" height="10.800" viewBox="0 0 9.6 10" preserveAspectRatio="none"><path d="M3.8 1.6h5M3.8 4.8h5M3.8 8h5" stroke="#3A8FD0" stroke-width=".8"/><path d="M.6 1.8l.8.8L2.8.8M.6 5l.8.8L2.8 4M.6 8.2l.8.8L2.8 7.2" fill="none" stroke="#3A8FD0" stroke-width=".7"/></svg>
<div class="t tr" style="left:25.7px;top:415.2px;transform:translateY(-50%) scaleX(0.888);">Rule Usage</div>
<svg class="abs" style="left:25.2px;top:421.0px" width="10.2" height="10.800" viewBox="0 0 9.6 10" preserveAspectRatio="none"><rect x=".6" y=".6" width="5" height="6" fill="#DCE6F2" stroke="#6C8EB8" stroke-width=".6"/><circle cx="5.4" cy="5.6" r="3" fill="#fff" stroke="#DC3B3B" stroke-width=".9"/><path d="M3.4 3.6l4 4" stroke="#DC3B3B" stroke-width=".9"/></svg>
<div class="t tr" style="left:37.2px;top:426.8px;transform:translateY(-50%) scaleX(0.956);">Unused in 30 days</div>
<div class="t tr" style="left:105.6px;top:426.0px;transform:translateY(-50%) scaleX(0.94);color:#555">0</div>
<svg class="abs" style="left:25.2px;top:432.7px" width="10.2" height="10.800" viewBox="0 0 9.6 10" preserveAspectRatio="none"><rect x=".6" y=".6" width="5" height="6" fill="#DCE6F2" stroke="#6C8EB8" stroke-width=".6"/><circle cx="5.4" cy="5.6" r="3" fill="#fff" stroke="#DC3B3B" stroke-width=".9"/><path d="M3.4 3.6l4 4" stroke="#DC3B3B" stroke-width=".9"/></svg>
<div class="t tr" style="left:37.2px;top:438.5px;transform:translateY(-50%) scaleX(0.956);">Unused in 90 days</div>
<div class="t tr" style="left:105.6px;top:437.7px;transform:translateY(-50%) scaleX(0.94);color:#555">0</div>
<svg class="abs" style="left:25.2px;top:444.3px" width="10.2" height="10.800" viewBox="0 0 9.6 10" preserveAspectRatio="none"><rect x=".6" y=".6" width="5" height="6" fill="#DCE6F2" stroke="#6C8EB8" stroke-width=".6"/><circle cx="5.4" cy="5.6" r="3" fill="#fff" stroke="#DC3B3B" stroke-width=".9"/><path d="M3.4 3.6l4 4" stroke="#DC3B3B" stroke-width=".9"/></svg>
<div class="t tr" style="left:37.2px;top:450.1px;transform:translateY(-50%) scaleX(0.972);">Unused</div>
<div class="t tr" style="left:105.6px;top:449.3px;transform:translateY(-50%) scaleX(0.94);color:#555">0</div>
<div class="abs" style="left:113.9px;top:397.0px;width:14px;height:13px;background:#fff"></div>
<div class="abs" style="left:112.0px;top:397.0px;width:1.9px;height:13px;background:#E1E3E6"></div>
<div class="abs" style="left:113.6px;top:270.6px;width:2.2px;height:20px;border:.5px solid #EDEDED;border-left:0;background:#fff"></div>
<svg class="abs" style="left:113.2px;top:278.9px" width="2.4" height="4" viewBox="0 0 2.4 4"><path d="M2 .5L.5 2 2 3.500z" fill="#666"/></svg>
</div>
<div class="abs" style="left:893.8px;top:104.4px;width:85px;height:85px;border-radius:50%;background:#fff;border:3.2px solid #F6B91B;box-shadow:0 2px 9px rgba(130,80,0,.42)"></div>
<svg class="abs" style="left:908px;top:122px" width="58" height="50" viewBox="908 122 58 50"><g fill="none" stroke="#141414" stroke-width="1.4">
<rect x="912.7" y="127" width="47.8" height="40"/>
<rect x="917.9" y="131.9" width="6.6" height="15.8"/>
<rect x="926.8" y="131.9" width="19.3" height="15.8"/>
<rect x="949.2" y="131.9" width="5.8" height="6"/>
<rect x="949.2" y="141.8" width="5.8" height="5.9"/>
<rect x="917.9" y="151.6" width="37.1" height="11.2"/>
<path d="M919.4 136.5h2.4M919.4 139.7h2.4M919.4 142.9h2.4" />
<path d="M929.7 136.5h2.4M934 136.5h8.2M929.7 139.7h2.4M934 139.7h8.2M929.7 142.9h2.4M934 142.9h8.2"/>
<path d="M920.6 155.4h31M920.6 158.7h27"/>
<path d="M950.6 134h3M950.6 135.9h1.8M950.6 143.9h3M950.6 145.8h1.8" stroke-width=".8"/>
</g></svg>
</body></html>
